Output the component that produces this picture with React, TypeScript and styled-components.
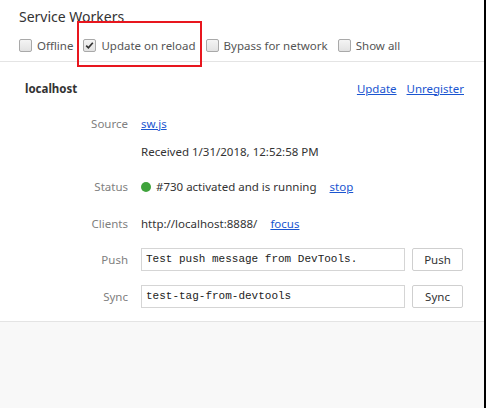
import React from "react";
import styled, { createGlobalStyle } from "styled-components";

const GlobalStyle = createGlobalStyle`
  html, body {
    margin: 0;
    padding: 0;
    background: #f8f8f8;
  }
  body {
    font-family: "Noto Sans", "Open Sans", Arial, sans-serif;
    font-size: 11.5px;
    color: #333;
  }
`;

type Row = {
  label: string;
  content: React.ReactNode;
  height: number;
};

const App: React.FC = () => {
  const rows: Row[] = [
    { label: "Source", content: <Link>sw.js</Link>, height: 28 },
    { label: "", content: <span>Received 1/31/2018, 12:52:58 PM</span>, height: 28 },
    {
      label: "Status",
      content: (
        <Status>
          <Dot />
          <span>#730 activated and is running</span>
          <Link>stop</Link>
        </Status>
      ),
      height: 43,
    },
    {
      label: "Clients",
      content: (
        <Status>
          <span>http://localhost:8888/</span>
          <Link>focus</Link>
        </Status>
      ),
      height: 30,
    },
    {
      label: "Push",
      content: (
        <FieldRow>
          <TextField defaultValue="Test push message from DevTools." />
          <Button type="button">Push</Button>
        </FieldRow>
      ),
      height: 42,
    },
    {
      label: "Sync",
      content: (
        <FieldRow>
          <TextField defaultValue="test-tag-from-devtools" />
          <Button type="button">Sync</Button>
        </FieldRow>
      ),
      height: 32,
    },
  ];

  return (
    <Page>
      <GlobalStyle />
      <Header>
        <Title>Service Workers</Title>
        <Options>
          <Option>
            <Check />
            Offline
          </Option>
          <Option>
            <Check checked />
            Update on reload
          </Option>
          <Option>
            <Check />
            Bypass for network
          </Option>
          <Option>
            <Check />
            Show all
          </Option>
        </Options>
        <Highlight />
      </Header>
      <Worker>
        <WorkerHead>
          <Origin>localhost</Origin>
          <Actions>
            <Link>Update</Link>
            <Link>Unregister</Link>
          </Actions>
        </WorkerHead>
        <Details>
          {rows.map((row, i) => (
            <DetailRow key={i} $h={row.height}>
              <Label>{row.label}</Label>
              <Value>{row.content}</Value>
            </DetailRow>
          ))}
        </Details>
      </Worker>
    </Page>
  );
};

const Check: React.FC<{ checked?: boolean }> = ({ checked }) => (
  <Box>
    {checked && (
      <svg width="9" height="9" viewBox="0 0 9 9">
        <path d="M1.2 4.6 L3.4 6.8 L7.8 1.8" fill="none" stroke="#333" strokeWidth="1.7" />
      </svg>
    )}
  </Box>
);

const Page = styled.div`
  width: 484px;
  height: 408px;
  border-right: 2px solid #000;
  display: flex;
  flex-direction: column;
  background: #f8f8f8;
`;

const Header = styled.div`
  position: relative;
  background: #fff;
  padding: 7px 0 0 19px;
  height: 54px;
  border-bottom: 1px solid #e4e4e4;
`;

const Title = styled.div`
  font-size: 14px;
  color: #333;
  line-height: 20px;
`;

const Options = styled.div`
  display: flex;
  align-items: center;
  gap: 10px;
  margin-top: 8px;
  height: 20px;
`;

const Option = styled.label`
  display: flex;
  align-items: center;
  gap: 5px;
  color: #555;
`;

const Box = styled.span`
  width: 11px;
  height: 11px;
  border: 1px solid #a9a9a9;
  border-radius: 2px;
  background: linear-gradient(#f4f4f4, #e2e2e2);
  display: flex;
  align-items: center;
  justify-content: center;
`;

const Highlight = styled.div`
  position: absolute;
  left: 77px;
  top: 21px;
  width: 121px;
  height: 42px;
  border: 2px solid #e8161e;
`;

const Worker = styled.div`
  background: #fff;
  padding: 17px 20px 0 25px;
  height: 242px;
  border-bottom: 1px solid #e4e4e4;
`;

const WorkerHead = styled.div`
  display: flex;
  justify-content: space-between;
  align-items: center;
  height: 18px;
`;

const Origin = styled.div`
  font-weight: bold;
  color: #333;
`;

const Actions = styled.div`
  display: flex;
  gap: 10px;
`;

const Link = styled.a`
  color: #1a55d0;
  text-decoration: underline;
  cursor: pointer;
`;

const Details = styled.div`
  margin-top: 12px;
  display: flex;
  flex-direction: column;
`;

const DetailRow = styled.div<{ $h: number }>`
  display: grid;
  grid-template-columns: 103px 1fr;
  column-gap: 13px;
  align-items: center;
  height: ${(p) => p.$h}px;
`;

const Label = styled.div`
  text-align: right;
  color: #808080;
`;

const Value = styled.div`
  color: #333;
`;

const Status = styled.div`
  display: flex;
  align-items: center;
  gap: 13px;
`;

const Dot = styled.span`
  width: 10px;
  height: 10px;
  border-radius: 50%;
  background: #3fa33c;
  margin-right: -8px;
`;

const FieldRow = styled.div`
  display: flex;
  align-items: center;
  gap: 7px;
`;

const TextField = styled.input`
  width: 254px;
  height: 21px;
  padding: 0 4px;
  border: 1px solid #d5d5d5;
  font-family: "Liberation Mono", "DejaVu Sans Mono", monospace;
  font-size: 11px;
  color: #222;
  box-sizing: content-box;
  outline: none;
`;

const Button = styled.button`
  width: 51px;
  height: 23px;
  border: 1px solid #cfcfcf;
  border-radius: 2px;
  background: #fff;
  font-family: "Noto Sans", "Open Sans", Arial, sans-serif;
  font-size: 11.5px;
  color: #333;
`;

export default App;
